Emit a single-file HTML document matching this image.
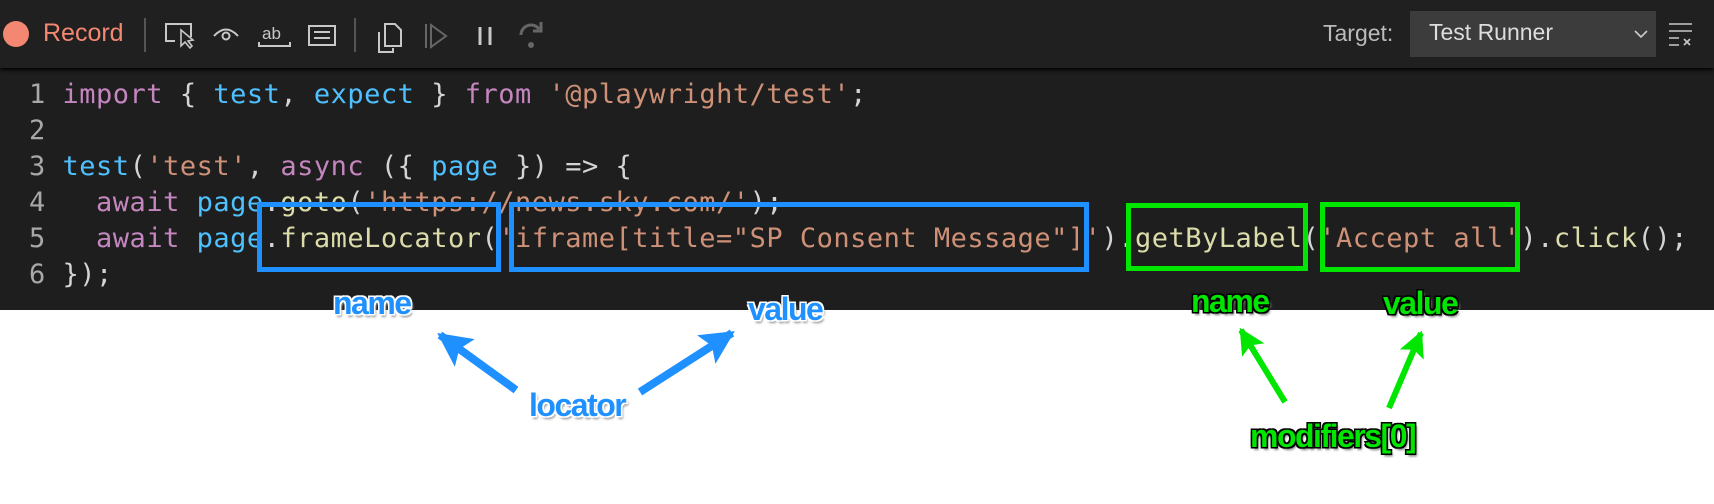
<!DOCTYPE html>
<html><head><meta charset="utf-8"><style>
body{margin:0;width:1714px;height:504px;background:#fff;position:relative;overflow:hidden;font-family:"Liberation Sans",sans-serif}
.dark{position:absolute;left:0;top:0;width:1714px;height:310px;background:#1e1e1e}
.tb{position:absolute;left:0;top:0;width:1714px;height:68px;background:#202020;box-shadow:0 2px 4px #000}
.code{position:absolute;left:29px;top:77px;font-family:"DejaVu Sans Mono","Liberation Mono",monospace;font-size:27px;line-height:36px;color:#d4d4d4;white-space:pre;letter-spacing:0.5px}
.ln{color:#a8a8a8}
.k{color:#c586c0}.v{color:#4fc1ff}.s{color:#ce9178}.f{color:#dcdcaa}
.box{position:absolute;border:5px solid}
.lb{position:absolute;font-weight:bold;font-size:32px;letter-spacing:-1.5px}
.bl{color:#1e90ff;text-shadow:-1.5px -1.5px 0 #fff,1.5px -1.5px 0 #fff,-1.5px 1.5px 0 #fff,1.5px 1.5px 0 #fff,2px 3px 2px #999}
.gr{color:#00e600;text-shadow:-1.5px -1.5px 0 #000,1.5px -1.5px 0 #000,-1.5px 1.5px 0 #000,1.5px 1.5px 0 #000,2px 3px 2px #888}
</style></head><body>
<div class="dark"></div>
<div class="tb">
<svg width="1714" height="68" style="position:absolute;left:0;top:0" fill="none" stroke="#c8c8c8" stroke-width="2">
<circle cx="16" cy="34" r="13" fill="#f48771" stroke="none"/>
<line x1="145" y1="18" x2="145" y2="52" stroke="#555"/>
<line x1="355" y1="18" x2="355" y2="52" stroke="#555"/>
<path d="M175 41h-9v-17h25v13"/><path d="M181 30l0 16 4-4 5 6 2-2-4-5 5-1z" stroke-width="1.6"/>
<path d="M214 36q12-13 24 0"/><circle cx="226" cy="36" r="3.5"/>
<text x="262" y="39" font-family="Liberation Sans" font-size="17" fill="#c8c8c8" stroke="none">ab</text>
<path d="M259 42v4h31v-4"/>
<path d="M309 26h26v19h-26z"/><path d="M314 32h16M314 38h16"/>
<path d="M379 32v20h14v-4"/><path d="M385 24h10l6 6v16h-16z"/>
<line x1="426" y1="24" x2="426" y2="48" stroke="#666"/><path d="M431 25l15 11-15 11z" stroke="#666"/>
<line x1="480" y1="27" x2="480" y2="45" stroke-width="3"/><line x1="490" y1="27" x2="490" y2="45" stroke-width="3"/>
<path d="M521 35a10 10 0 0 1 18-6" stroke="#666" stroke-width="3"/><path d="M541 22v9h-8" stroke="#666" stroke-width="3"/><circle cx="531" cy="45" r="3" fill="#666" stroke="none"/>
<path d="M1669 24h23M1669 31h23M1669 38h10M1669 45h10" stroke-width="1.6"/><path d="M1684 39l6 6M1690 39l-6 6" stroke-width="1.6"/>
</svg>
<div style="position:absolute;left:43px;top:19px;font-size:25px;color:#f48771">Record</div>
<div style="position:absolute;left:1323px;top:20px;font-size:23px;color:#bbb">Target:</div>
<div style="position:absolute;left:1410px;top:11px;width:246px;height:46px;background:#3c3c3c"></div>
<div style="position:absolute;left:1429px;top:19px;font-size:23px;color:#ddd">Test Runner</div>
<svg width="40" height="30" style="position:absolute;left:1620px;top:20px" fill="none" stroke="#ccc" stroke-width="1.6"><path d="M15 11l6 6 6-6"/></svg>
</div>
<div class="code"><span class="ln">1</span> <span class="k">import</span> { <span class="v">test</span>, <span class="v">expect</span> } <span class="k">from</span> <span class="s">'@playwright/test'</span>;
<span class="ln">2</span>
<span class="ln">3</span> <span class="v">test</span>(<span class="s">'test'</span>, <span class="k">async</span> ({ <span class="v">page</span> }) => {
<span class="ln">4</span>   <span class="k">await</span> <span class="v">page</span>.<span class="f">goto</span>(<span class="s">'https://news.sky.com/'</span>);
<span class="ln">5</span>   <span class="k">await</span> <span class="v">page</span>.<span class="f">frameLocator</span>(<span class="s">'iframe[title="SP Consent Message"]'</span>).<span class="f">getByLabel</span>(<span class="s">'Accept all'</span>).<span class="f">click</span>();
<span class="ln">6</span> });</div>
<div class="box" style="left:257px;top:202px;width:234px;height:60px;border-color:#1e90ff"></div>
<div class="box" style="left:509px;top:202px;width:570px;height:60px;border-color:#1e90ff"></div>
<div class="box" style="left:1126px;top:203px;width:172px;height:58px;border-color:#00e600"></div>
<div class="box" style="left:1320px;top:202px;width:190px;height:60px;border-color:#00e600"></div>
<div class="lb bl" style="left:333px;top:285px">name</div>
<div class="lb bl" style="left:748px;top:291px">value</div>
<div class="lb bl" style="left:529px;top:387px">locator</div>
<div class="lb gr" style="left:1191px;top:283px">name</div>
<div class="lb gr" style="left:1383px;top:285px">value</div>
<div class="lb gr" style="left:1250px;top:418px">modifiers[0]</div>
<svg width="1714" height="504" style="position:absolute;left:0;top:0">
<defs>
<marker id="hb" viewBox="0 0 10 10" refX="9" refY="5" markerWidth="38" markerHeight="34" markerUnits="userSpaceOnUse" orient="auto"><path d="M0 0L10 5 0 10 2 5z" fill="#1e90ff"/></marker>
<marker id="hg" viewBox="0 0 10 10" refX="9" refY="5" markerWidth="38" markerHeight="26" markerUnits="userSpaceOnUse" orient="auto"><path d="M0 0L10 5 0 10 2 5z" fill="#00e600"/></marker>
</defs>
<line x1="516" y1="390" x2="440" y2="335" stroke="#1e90ff" stroke-width="8" marker-end="url(#hb)"/>
<line x1="640" y1="392" x2="732" y2="333" stroke="#1e90ff" stroke-width="8" marker-end="url(#hb)"/>
<line x1="1285" y1="402" x2="1241" y2="330" stroke="#00e600" stroke-width="6" marker-end="url(#hg)"/>
<line x1="1389" y1="408" x2="1421" y2="333" stroke="#00e600" stroke-width="6" marker-end="url(#hg)"/>
</svg>
</body></html>
